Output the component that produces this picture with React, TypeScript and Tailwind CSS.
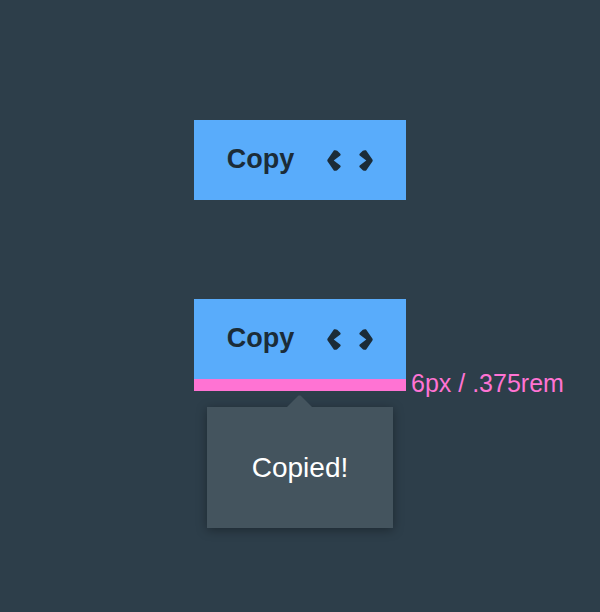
import React from 'react';

const Chevron: React.FC<{ dir: 'left' | 'right' }> = ({ dir }) => (
  <svg
    width="14"
    height="21"
    viewBox="0 0 14 21"
    className={'block shrink-0 ' + (dir === 'right' ? 'rotate-180' : '')}
    fill="#1b2c38"
  >
    <path d="M7 0.3 Q8.7 -0.2 10.2 0.8 L13.3 3.8 Q14 4.6 13.3 5.4 L6.7 10.5 L13.3 15.6 Q14 16.4 13.3 17.2 L10.2 20.2 Q8.7 21.2 7 20.7 L0.6 11.5 Q0 10.5 0.6 9.5 Z" />
  </svg>
);

const CopyButton: React.FC = () => (
  <button className="w-[212px] h-[80px] bg-[#59acfb] flex items-center justify-center text-[#1b2c38]">
    <span className="font-bold text-[27px] leading-none -mt-[2px]">Copy</span>
    <span className="ml-[33px] flex items-center gap-[18px]">
      <Chevron dir="left" />
      <Chevron dir="right" />
    </span>
  </button>
);

const App: React.FC = () => {
  return (
    <div
      className="w-[600px] h-[612px] bg-[#2d3e4a] flex flex-col items-center pt-[120px]"
      style={{ fontFamily: '"Liberation Sans", Arial, sans-serif' }}
    >
      <CopyButton />

      <div className="mt-[99px] flex flex-col items-center">
        <div className="relative">
          <CopyButton />
          <div className="h-[12px] w-[212px] bg-[#ff73d3]" />
          <span className="absolute left-[217px] top-[72px] text-[25px] leading-none text-[#ff73d3] whitespace-nowrap">
            6px / .375rem
          </span>
        </div>

        <div className="relative mt-[16px] w-[186px] h-[121px] bg-[#44545e] shadow-[0_2px_10px_rgba(0,0,0,0.35)] flex items-center justify-center">
          <svg
            className="absolute -top-[12px] left-[79px]"
            width="27"
            height="13"
            viewBox="0 0 27 13"
          >
            <path d="M0 13 L12.5 0.5 L14.5 0.5 L27 13 Z" fill="#44545e" />
          </svg>
          <span className="text-white text-[28px] leading-none">Copied!</span>
        </div>
      </div>
    </div>
  );
};

export default App;
